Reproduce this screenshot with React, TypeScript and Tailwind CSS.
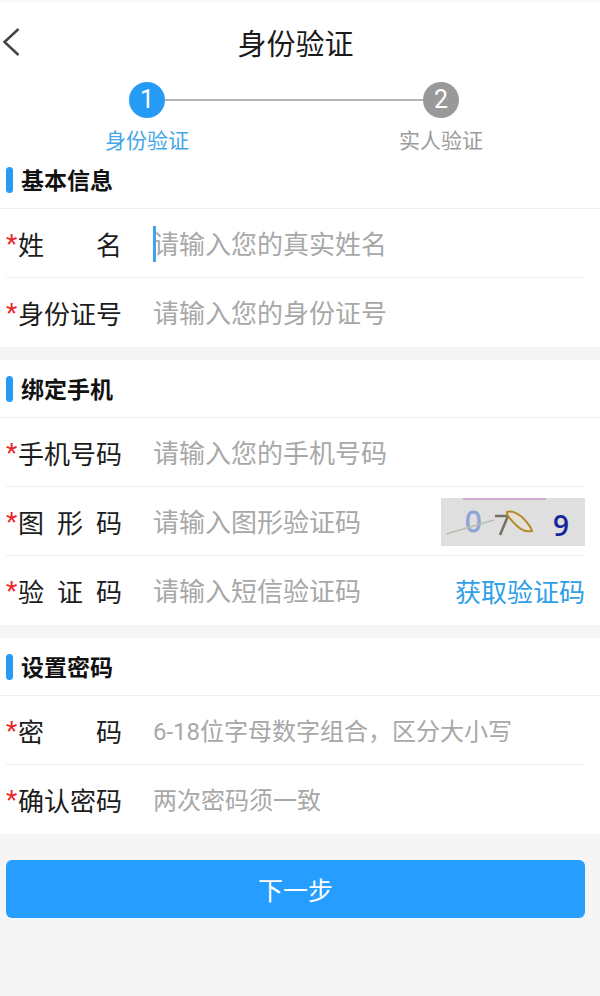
import React, { useState } from 'react';

interface FieldConfig {
    id:          string;
    label:       string;
    placeholder: string;
    type?:       string;
    small?:      boolean;
    caret?:      boolean;
    extra?:      React.ReactNode;
}

interface SectionConfig {
    title:  string;
    fields: FieldConfig[];
}

// ── Captcha ─────────────────────────────────────────────────
const Captcha: React.FC = () => (
    <button type="button" aria-label="刷新图形码" className="shrink-0">
        <svg width="144" height="48" viewBox="0 0 144 48" className="block">
            <rect width="144" height="48" fill="#dfdfdf" />
            <path d="M22 1H105" stroke="#d3a9cd" strokeWidth="2" />
            <g fontFamily="Open Sans, sans-serif" fontSize="29">
                <text x="24" y="34" fill="#8fa5d6" stroke="#8fa5d6">0</text>
                <text x="112" y="38" fill="#15259b" fontSize="28" fontWeight="600">9</text>
            </g>
            <path d="M5 36L53 22" stroke="#b9bdae" strokeWidth="1.5" fill="none" />
            <path d="M54 18H67L59 37" stroke="#77705f" strokeWidth="2.5" fill="none" />
            <path
                d="M66 14C71 12 76 15 81 19C86 24 90 29 91 33C86 34 80 32 75 27C70 22 65 17 66 14Z"
                stroke="#b58a2c"
                strokeWidth="2"
                fill="#e5e1d6"
            />
        </svg>
    </button>
);

const SendCodeButton: React.FC = () => (
    <button type="button" className="shrink-0 text-[26px] leading-9 text-[#2f9fe8]">
        获取验证码
    </button>
);

const SECTIONS: SectionConfig[] = [
    {
        title: '基本信息',
        fields: [
            { id: 'name', label: '姓名', placeholder: '请输入您的真实姓名', caret: true },
            { id: 'idcard', label: '身份证号', placeholder: '请输入您的身份证号' },
        ],
    },
    {
        title: '绑定手机',
        fields: [
            { id: 'phone', label: '手机号码', placeholder: '请输入您的手机号码', type: 'tel' },
            { id: 'captcha', label: '图形码', placeholder: '请输入图形验证码', extra: <Captcha /> },
            { id: 'sms', label: '验证码', placeholder: '请输入短信验证码', extra: <SendCodeButton /> },
        ],
    },
    {
        title: '设置密码',
        fields: [
            { id: 'password', label: '密码', placeholder: '6-18位字母数字组合，区分大小写', type: 'password', small: true },
            { id: 'confirm', label: '确认密码', placeholder: '两次密码须一致', type: 'password', small: true },
        ],
    },
];

// ── Steps ───────────────────────────────────────────────────
const Steps: React.FC = () => (
    <ol className="grid grid-cols-2 pr-3">
        <li className="flex flex-col items-center" aria-current="step">
            <div className="flex w-full items-center">
                <span className="flex-1" />
                <span className="flex size-9 items-center justify-center rounded-full bg-[#259bf5] font-[Roboto] text-[25px] leading-9 text-white">1</span>
                <span className="h-[2px] flex-1 bg-[#b5b5b5]" />
            </div>
            <span className="mt-[9px] text-[21px] leading-6 text-[#45a6e8]">身份验证</span>
        </li>
        <li className="flex flex-col items-center">
            <div className="flex w-full items-center">
                <span className="h-[2px] flex-1 bg-[#b5b5b5]" />
                <span className="flex size-9 items-center justify-center rounded-full bg-[#999999] font-[Roboto] text-[25px] leading-9 text-white">2</span>
                <span className="flex-1" />
            </div>
            <span className="mt-[9px] text-[21px] leading-6 text-[#9b9b9b]">实人验证</span>
        </li>
    </ol>
);

// ── Field ───────────────────────────────────────────────────
const Field: React.FC<FieldConfig> = ({ id, label, placeholder, type = 'text', small, caret, extra }) => {
    const [value, setValue] = useState('');

    return (
        <div className="mr-[15px] ml-[6px] flex h-[69px] items-center border-b border-[#eeeeee] pt-[2px] last:border-transparent">
            <label htmlFor={id} className="flex shrink-0 items-center text-[26px] leading-9 text-[#1c1c1c]">
                <span className="w-3 font-[Roboto] text-[#e8262b]">*</span>
                <span className="w-[104px] [text-align-last:justify]">{label}</span>
            </label>
            <div className="relative ml-[31px] min-w-0 flex-1">
                {caret && value === '' && (
                    <span className="absolute top-0 left-0 h-9 w-[3px] bg-[#3fa4ee]" />
                )}
                <input
                    id={id}
                    type={type}
                    value={value}
                    onChange={(e) => setValue(e.target.value)}
                    placeholder={placeholder}
                    className={`block h-9 w-full bg-transparent pt-[2px] font-[Roboto,'Noto_Sans_CJK_SC',sans-serif] text-[#1c1c1c] caret-[#3fa4ee] outline-none placeholder:text-[#a8a8a8] ${
                        small ? 'text-[24px]' : 'text-[26px]'
                    }`}
                />
            </div>
            {extra}
        </div>
    );
};

const Section: React.FC<SectionConfig> = ({ title, fields }) => (
    <section className="bg-white">
        <div className="flex h-[58px] items-center border-b border-[#f0f0f0] pl-[6px]">
            <span className="h-[26px] w-[7px] rounded-full bg-[#259bf5]" />
            <h2 className="ml-2 pb-[2px] text-[23px] leading-8 font-bold text-[#111111]">{title}</h2>
        </div>
        <div>
            {fields.map((field) => (
                <Field key={field.id} {...field} />
            ))}
        </div>
    </section>
);

export default function App() {
    return (
        <main className="min-h-screen bg-[#f5f5f5] font-['Noto_Sans_CJK_SC',sans-serif]">
            <form onSubmit={(e) => e.preventDefault()}>
                <div className="border-t-2 border-[#f8f8f8] bg-white">
                    <header className="flex h-20 items-center pr-[9px]">
                        <button type="button" aria-label="返回" className="w-6 shrink-0">
                            <svg width="24" height="32" viewBox="0 0 24 32" fill="none" stroke="#444444" strokeWidth="2.5">
                                <path d="M18.5 3L4.5 16L18.5 29" />
                            </svg>
                        </button>
                        <h1 className="flex-1 pr-6 text-center text-[29px] leading-10 text-[#1a1a1a]">身份验证</h1>
                    </header>
                    <Steps />
                </div>

                <div className="flex flex-col gap-[13px]">
                    {SECTIONS.map((section) => (
                        <Section key={section.title} {...section} />
                    ))}
                </div>

                <div className="mt-[26px] mr-[15px] ml-[6px]">
                    <button type="submit" className="h-[58px] w-full rounded-md bg-[#259eff] text-[25px] leading-9 text-white">
                        下一步
                    </button>
                </div>
            </form>
        </main>
    );
}
